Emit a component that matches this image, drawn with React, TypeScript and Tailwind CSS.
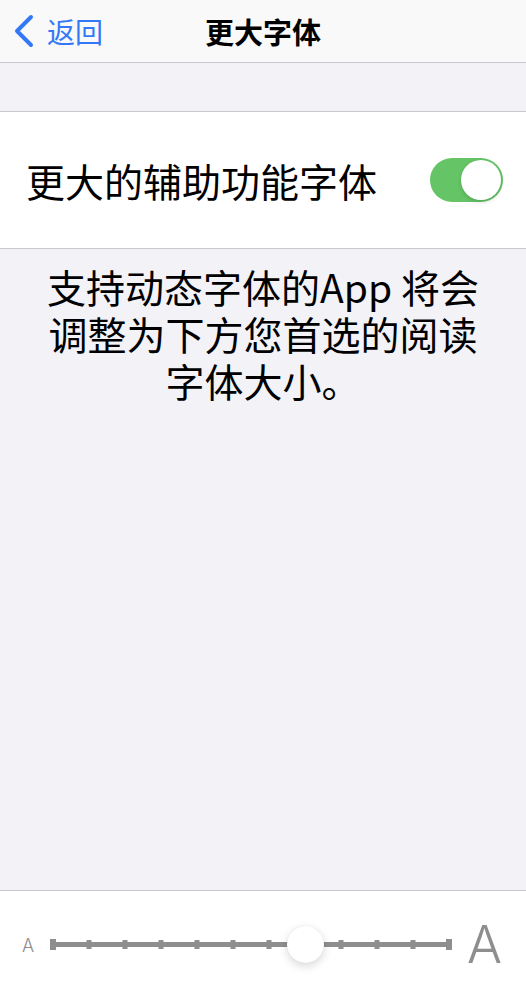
import React from 'react';

const cjk = { fontFamily: '"Noto Sans CJK SC", "Noto Sans", sans-serif' };

const ticks = [0, 1, 2, 3, 4, 5, 6, 7, 8, 9, 10, 11];

const SizeSlider: React.FC<{ value: number }> = ({ value }) => {
  const step = 36;
  return (
    <div className="relative w-[404px] h-[40px]">
      <svg width="404" height="40" viewBox="0 0 404 40" className="absolute inset-0">
        <rect x="2" y="17" width="400" height="5" fill="#8e8e8e" />
        {ticks.map(i => {
          const x = 4 + i * step;
          const isEnd = i === 0 || i === 11;
          return (
            <rect
              key={i}
              x={isEnd ? x - 3 : x - 2.5}
              y={isEnd ? 14 : 15}
              width={isEnd ? 6 : 5}
              height={isEnd ? 11 : 9}
              fill="#8e8e8e"
            />
          );
        })}
      </svg>
      <div
        className="absolute top-[1px] w-[37px] h-[37px] rounded-full bg-white shadow-[0_3px_10px_rgba(0,0,0,0.16),0_0_1px_rgba(0,0,0,0.1)]"
        style={{ left: 4 + value * step - 18.5 }}
      />
    </div>
  );
};

const lines = ['支持动态字体的App 将会', '调整为下方您首选的阅读', '字体大小。'];

const App: React.FC = () => {
  return (
    <div className="h-screen flex flex-col bg-[#f2f2f7]" style={cjk}>
      <div className="h-[63px] shrink-0 bg-[#f9f9f9] border-b border-[#c8c7cc] grid grid-cols-[1fr_auto_1fr] items-center">
        <div className="flex items-center pl-[13px] gap-[12px] text-[#3478f6]">
          <svg width="22" height="34" viewBox="0 0 22 34" fill="none">
            <path d="M18 3 L4 17 L18 31" stroke="#3478f6" strokeWidth="4" strokeLinecap="round" strokeLinejoin="round" />
          </svg>
          <span className="text-[28px] leading-none">返回</span>
        </div>
        <div className="text-[29px] font-semibold leading-none text-black">更大字体</div>
        <div />
      </div>

      <div className="h-[48px] shrink-0" />

      <div className="h-[138px] shrink-0 bg-white border-y border-[#c8c7cc] flex items-center justify-between pl-[26px] pr-[23px]">
        <span className="text-[39px] leading-none text-black">更大的辅助功能字体</span>
        <div className="w-[73px] h-[44px] rounded-full bg-[#65c466] flex items-center justify-end pr-[2px]">
          <div className="w-[40px] h-[40px] rounded-full bg-white shadow-[0_2px_4px_rgba(0,0,0,0.15)]" />
        </div>
      </div>

      <div className="flex-1 pt-[14px] flex flex-col items-center text-[39px] text-black whitespace-nowrap">
        {lines.map(l => (
          <div key={l} className="h-[47px] leading-[47px] overflow-visible">{l}</div>
        ))}
      </div>

      <div className="h-[109px] shrink-0 bg-white border-t border-[#c8c7cc] flex items-center pl-[22px] pr-[24px]">
        <span className="text-[18px] font-light text-[#8e8e8e] w-[27px]" style={{ fontFamily: 'Inter, "Liberation Sans", sans-serif' }}>A</span>
        <SizeSlider value={7} />
        <span className="ml-auto text-[52px] font-light leading-none text-[#8e8e8e]" style={{ fontFamily: 'Inter, "Liberation Sans", sans-serif' }}>A</span>
      </div>
    </div>
  );
};

export default App;
